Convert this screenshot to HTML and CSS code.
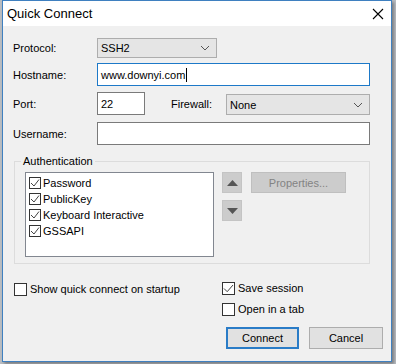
FILE: index.html
```html
<!DOCTYPE html>
<html>
<head>
<meta charset="utf-8">
<link rel="stylesheet" href="styles.css">
</head>
<body>
<div class="window">
  <div class="titlebar">
    <span class="title">Quick Connect</span>
    <svg class="close" width="12" height="12" viewBox="0 0 12 12"><path d="M1 1 L11 11 M11 1 L1 11" stroke="#000" stroke-width="1.1" fill="none"/></svg>
  </div>
  <div class="content">
    <div class="row r1">
      <span class="lbl">Protocol:</span>
      <div class="combo proto"><span>SSH2</span><svg class="chev" width="10" height="6" viewBox="0 0 10 6"><path d="M1 1 L5 5 L9 1" stroke="#555" fill="none"/></svg></div>
    </div>
    <div class="row r2">
      <span class="lbl">Hostname:</span>
      <div class="edit wide focus"><span>www.downyi.com</span><span class="caret"></span></div>
    </div>
    <div class="row r3">
      <span class="lbl">Port:</span>
      <div class="edit port"><span>22</span></div>
      <span class="lbl2">Firewall:</span>
      <div class="combo fw"><span>None</span><svg class="chev" width="10" height="6" viewBox="0 0 10 6"><path d="M1 1 L5 5 L9 1" stroke="#555" fill="none"/></svg></div>
    </div>
    <div class="row r4">
      <span class="lbl">Username:</span>
      <div class="edit wide"></div>
    </div>

    <fieldset class="group">
      <legend>Authentication</legend>
      <div class="listbox">
        <div class="item"><span class="cb small"><svg width="10" height="10" viewBox="0 0 10 10"><path d="M1 5 L4 8 L9 1.5" stroke="#444" fill="none" stroke-width="1"/></svg></span>Password</div>
        <div class="item"><span class="cb small"><svg width="10" height="10" viewBox="0 0 10 10"><path d="M1 5 L4 8 L9 1.5" stroke="#444" fill="none" stroke-width="1"/></svg></span>PublicKey</div>
        <div class="item"><span class="cb small"><svg width="10" height="10" viewBox="0 0 10 10"><path d="M1 5 L4 8 L9 1.5" stroke="#444" fill="none" stroke-width="1"/></svg></span>Keyboard Interactive</div>
        <div class="item"><span class="cb small"><svg width="10" height="10" viewBox="0 0 10 10"><path d="M1 5 L4 8 L9 1.5" stroke="#444" fill="none" stroke-width="1"/></svg></span>GSSAPI</div>
      </div>
      <div class="arrows">
        <div class="arrowbtn"><svg width="11" height="6" viewBox="0 0 11 6"><path d="M0 6 L5.5 0 L11 6 Z" fill="#555"/></svg></div>
        <div class="arrowbtn"><svg width="11" height="6" viewBox="0 0 11 6"><path d="M0 0 L5.5 6 L11 0 Z" fill="#555"/></svg></div>
      </div>
      <div class="propbtn">Properties...</div>
    </fieldset>

    <div class="options">
      <div class="optcol left">
        <div class="opt"><span class="cb"></span>Show quick connect on startup</div>
      </div>
      <div class="optcol right">
        <div class="opt"><span class="cb"><svg width="11" height="11" viewBox="0 0 11 11"><path d="M1 5.5 L4.2 8.7 L10 2" stroke="#444" fill="none" stroke-width="1"/></svg></span>Save session</div>
        <div class="opt second"><span class="cb"></span>Open in a tab</div>
      </div>
    </div>

    <div class="buttons">
      <div class="btn default">Connect</div>
      <div class="btn">Cancel</div>
    </div>
  </div>
</div>
</body>
</html>
```
FILE: styles.css
```css
html, body {
  margin: 0;
  padding: 0;
}
body {
  width: 396px;
  height: 364px;
  background: #b9bdc2;
  font-family: "Liberation Sans", Arial, sans-serif;
  font-size: 11px;
  color: #000;
  overflow: hidden;
}
.window {
  margin-left: 2px;
  width: 388px;
  height: 360px;
  border: 1px solid #3f80c0;
  background: #f0f0f0;
  box-shadow: 2px 2px 3px rgba(0,0,0,0.35);
}
.titlebar {
  height: 25px;
  background: #fff;
  display: flex;
  align-items: center;
  justify-content: space-between;
  padding: 0 7px 0 4px;
}
.title {
  font-size: 13px;
  line-height: 25px;
}
.close {
  display: block;
}
.content {
  padding: 11px 8px 0 10px;
}
.row {
  display: flex;
  align-items: center;
}
.lbl {
  width: 84px;
  flex: none;
}
.r1 { height: 21px; }
.r2 { height: 23px; margin-top: 5px; }
.r3 { height: 23px; margin-top: 6px; }
.r4 { height: 23px; margin-top: 7px; }

.combo {
  box-sizing: border-box;
  height: 21px;
  background: #e5e5e5;
  border: 1px solid #adadad;
  display: flex;
  align-items: center;
  justify-content: space-between;
  padding: 0 6px 0 3px;
}
.combo .chev { display: block; }
.proto { width: 120px; height: 20px; }
.fw { width: 144px; align-self: flex-end; }
.edit {
  box-sizing: border-box;
  height: 23px;
  background: #fff;
  border: 1px solid #7a7a7a;
  display: flex;
  align-items: center;
  padding: 0 3px;
}
.edit.focus { border-color: #1d79c8; }
.wide { width: 273px; }
.port { width: 48px; }
.caret {
  display: inline-block;
  width: 1px;
  height: 14px;
  background: #000;
  margin-left: 1px;
}
.lbl2 {
  margin-left: 26px;
  width: 55px;
}

.group {
  margin: 10px 0 0 1px;
  width: 356px;
  box-sizing: border-box;
  border: 1px solid #dcdcdc;
  padding: 4px 10px 6px 10px;
  display: flex;
  align-items: flex-start;
  min-inline-size: 0;
}
.group legend {
  padding: 0 2px;
  margin-left: -4px;
  line-height: 13px;
}
.listbox {
  box-sizing: border-box;
  width: 189px;
  height: 85px;
  background: #fff;
  border: 1px solid #828790;
  padding: 2px 0 0 2px;
  flex: none;
}
.item {
  height: 16px;
  display: flex;
  align-items: center;
}
.cb {
  box-sizing: border-box;
  width: 13px;
  height: 13px;
  border: 1px solid #333;
  background: #fff;
  display: inline-flex;
  align-items: center;
  justify-content: center;
  margin-right: 3px;
  flex: none;
}
.cb.small {
  width: 12px;
  height: 12px;
  margin-left: 1px;
  margin-right: 2px;
}
.cb svg { display: block; }
.arrows {
  margin-left: 8px;
  display: flex;
  flex-direction: column;
  gap: 7px;
}
.arrowbtn {
  box-sizing: border-box;
  width: 20px;
  height: 21px;
  background: #cccccc;
  border: 1px solid #c4c4c4;
  display: flex;
  align-items: center;
  justify-content: center;
}
.arrowbtn svg { display: block; }
.propbtn {
  box-sizing: border-box;
  margin-left: 9px;
  width: 95px;
  height: 21px;
  background: #cccccc;
  border: 1px solid #bfbfbf;
  color: #838383;
  display: flex;
  align-items: center;
  justify-content: center;
}

.options {
  display: flex;
  margin-top: 16px;
}
.optcol.left {
  width: 208px;
  padding-left: 1px;
}
.opt {
  height: 16px;
  display: flex;
  align-items: center;
}
.optcol.left .opt { margin-top: 1px; }
.opt.second { margin-top: 5px; }

.buttons {
  display: flex;
  justify-content: flex-end;
  gap: 10px;
  margin-top: 10px;
}
.btn {
  box-sizing: border-box;
  width: 74px;
  height: 22px;
  background: #e1e1e1;
  border: 1px solid #adadad;
  display: flex;
  align-items: center;
  justify-content: center;
}
.btn.default {
  width: 73px;
  border: 2px solid #2a7cc7;
}
```
